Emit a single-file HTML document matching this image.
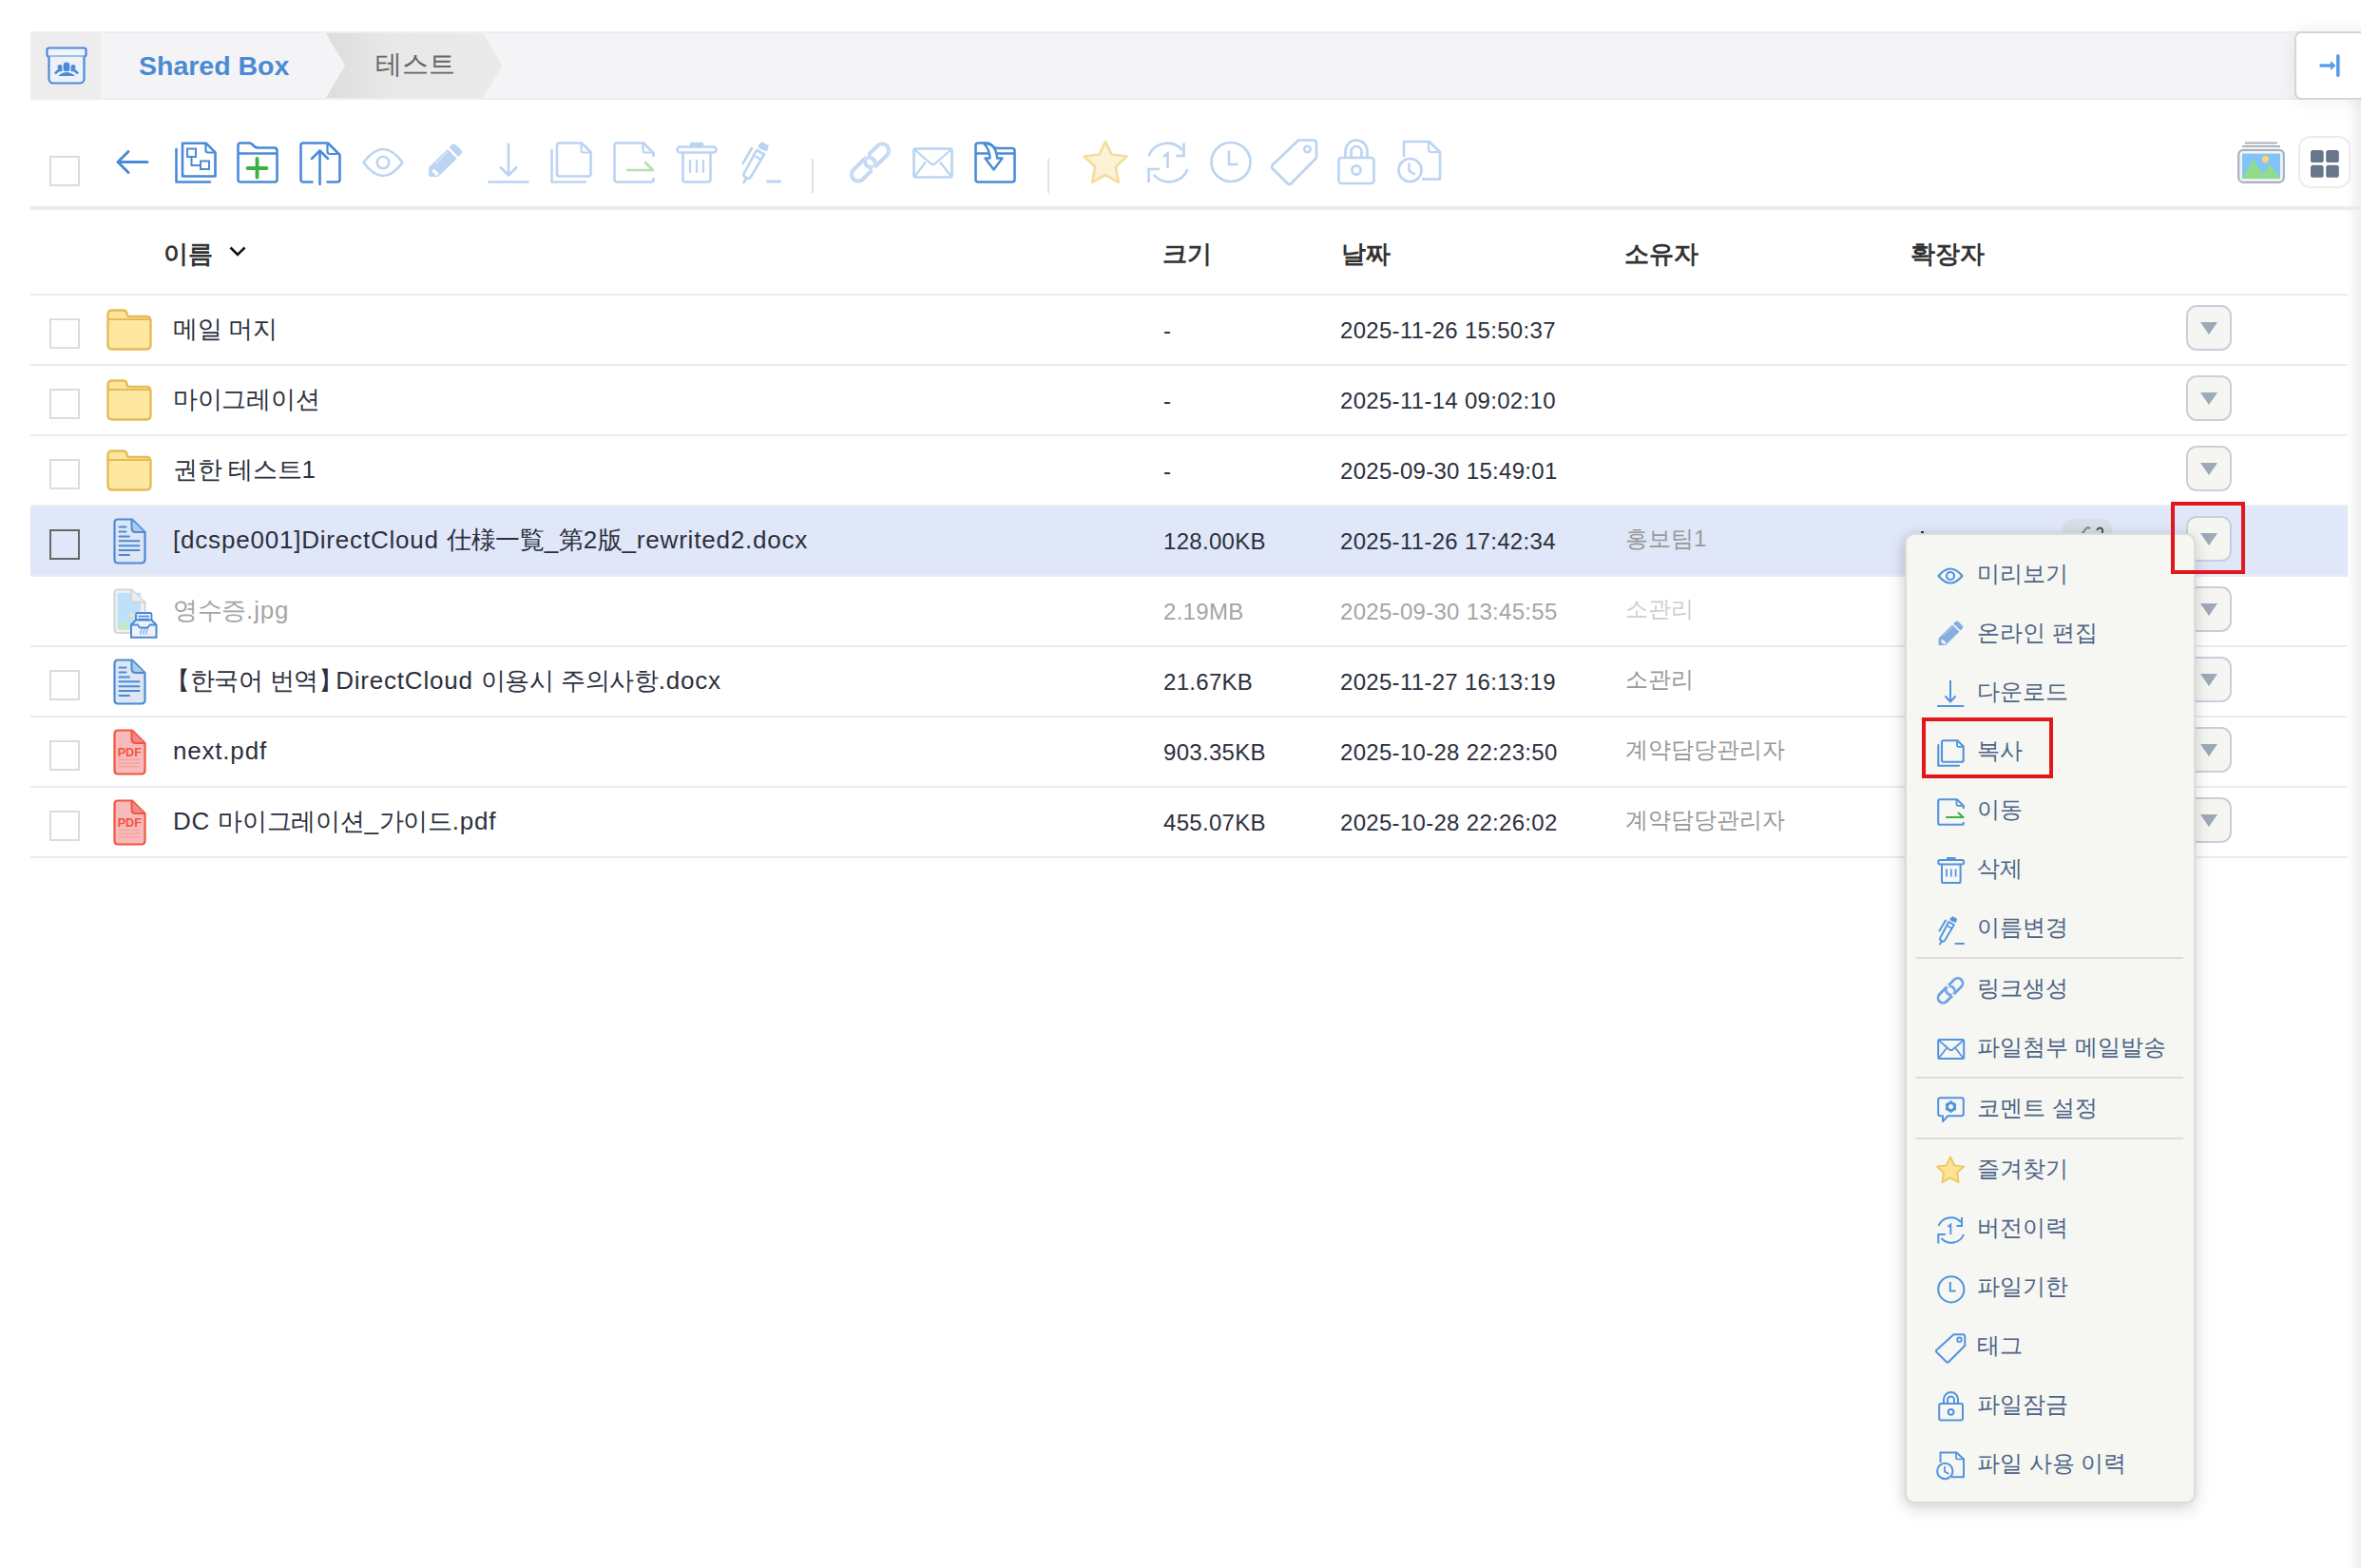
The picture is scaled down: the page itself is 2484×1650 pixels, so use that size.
<!DOCTYPE html>
<html><head><meta charset="utf-8">
<style>
*{box-sizing:border-box;margin:0;padding:0}
html,body{width:2484px;height:1650px;overflow:hidden;background:#fff;font-family:"Liberation Sans",sans-serif;position:relative}
.a{position:absolute}
svg.a{overflow:visible}
.txt{white-space:nowrap;line-height:1}
</style></head><body>

<!-- right panel shadow -->
<div class="a" style="left:2468px;top:100px;width:16px;height:1550px;background:linear-gradient(to right,rgba(0,0,0,0),rgba(0,0,0,0.06))"></div>

<!-- breadcrumb bar -->
<div class="a" style="left:32px;top:33px;width:2390px;height:72px;background:#f4f4f6;border:2px solid #eeeef1"></div>
<div class="a" style="left:34px;top:35px;width:72px;height:68px;background:#ededed"></div>


<!-- shared box icon -->
<svg class="a" style="left:48px;top:49px" width="44" height="40" viewBox="0 0 44 40">
 <rect x="1.5" y="1.5" width="41" height="9" rx="2" fill="#f0f3f8" stroke="#4a8ad8" stroke-width="2.2"/>
 <path d="M3.5 10.5 V34 a4.5 4.5 0 0 0 4.5 4.5 H36 a4.5 4.5 0 0 0 4.5 -4.5 V10.5" fill="#eef2f8" stroke="#4a8ad8" stroke-width="2.2"/>
 <circle cx="22" cy="20" r="3.4" fill="#4a8ad8"/><path d="M13 31 q9 -8 18 0 z" fill="#4a8ad8"/>
 <circle cx="15" cy="21.5" r="2.5" fill="#4a8ad8"/><circle cx="29" cy="21.5" r="2.5" fill="#4a8ad8"/>
 <path d="M10 28.5 q4 -5 7.5 -3.5 M34 28.5 q-4 -5 -7.5 -3.5" stroke="#4a8ad8" stroke-width="2.6" fill="none"/>
 <rect x="18.6" y="20" width="6.8" height="6" rx="2" fill="#4a8ad8"/>
</svg>
<div class="a txt" style="left:146px;top:55px;font-size:28.5px;font-weight:bold;color:#4a8ad4">Shared Box</div>
<!-- chevron segment -->
<svg class="a" style="left:343px;top:35px" width="186" height="68" viewBox="0 0 186 68">
 <defs><linearGradient id="cg" x1="0" x2="1" y1="0" y2="0"><stop offset="0" stop-color="#dcdcdc"/><stop offset="0.35" stop-color="#e8e8e8"/><stop offset="1" stop-color="#eaeaea"/></linearGradient></defs>
 <path d="M0 0 H165 L185.5 34 L165 68 H0 L20 34 Z" fill="url(#cg)"/>
</svg>
<div class="a txt" style="left:395px;top:54px;font-size:28px;color:#666">테스트</div>

<!-- collapse button -->
<div class="a" style="left:2414px;top:33px;width:90px;height:72px;background:#fff;border:2px solid #d6d6d6;border-radius:7px;box-shadow:0 0 22px rgba(0,0,0,0.07)"></div>
<svg class="a" style="left:2440px;top:56px" width="24" height="26" viewBox="0 0 24 26">
 <path d="M0.5 13 H13" stroke="#5b9be6" stroke-width="3.4"/>
 <path d="M12 8 L17.5 13 L12 18 Z" fill="#5b9be6"/>
 <rect x="18" y="1" width="3.6" height="24" rx="1.8" fill="#5b9be6"/>
</svg>


<!-- toolbar -->
<div class="a" style="left:52px;top:164px;width:32px;height:32px;border:2px solid #dcdcdc;background:#fff"></div>
<svg class="a" style="left:122px;top:157px" width="34" height="27" viewBox="0 0 34 27">
 <path d="M33 13.5 H2.5 M13 2.5 L2 13.5 L13 24.5" fill="none" stroke="#4a8ad8" stroke-width="3" stroke-linecap="round" stroke-linejoin="round"/>
</svg>
<!-- copy structure -->
<svg class="a" style="left:184px;top:149px" width="44" height="44" viewBox="0 0 44 44">
 <path d="M1.5 8 V42.5 H37" fill="none" stroke="#4a8ad8" stroke-width="2.6" stroke-linecap="round" stroke-linejoin="round"/>
 <path d="M8 1.8 H33 L42.5 11.3 V36.5 H8 Z" fill="none" stroke="#4a8ad8" stroke-width="2.6" stroke-linejoin="round"/>
 <path d="M32.5 2 V9 q0 2.5 2.5 2.5 H42" fill="none" stroke="#4a8ad8" stroke-width="2.2"/>
 <rect x="13" y="7.5" width="9" height="8.5" fill="none" stroke="#4a8ad8" stroke-width="2"/>
 <rect x="27" y="20.5" width="9" height="8.5" fill="none" stroke="#4a8ad8" stroke-width="2"/>
 <path d="M17.5 16 V25 H27" fill="none" stroke="#4a8ad8" stroke-width="2"/>
</svg>
<!-- new folder -->
<svg class="a" style="left:249px;top:149px" width="44" height="44" viewBox="0 0 44 44">
 <path d="M1.5 10 V4 q0 -2.5 2.5 -2.5 H13 q2 0 4 2 l1.5 1.5 q1.5 1.5 4 1.5 H39.5 q3 0 3 3 V40 q0 2.5 -2.5 2.5 H4 q-2.5 0 -2.5 -2.5 Z" fill="none" stroke="#4a8ad8" stroke-width="2.6"/>
 <path d="M1.5 12.5 H42.5" stroke="#4a8ad8" stroke-width="2.6"/>
 <path d="M11.5 28 H31.5 M21.5 18 V37.5" stroke="#3bb143" stroke-width="3.8" stroke-linecap="round"/>
</svg>
<!-- upload -->
<svg class="a" style="left:315px;top:149px" width="44" height="46" viewBox="0 0 44 46">
 <path d="M14.5 42.5 H4 q-2.5 0 -2.5 -2.5 V4 q0 -2.5 2.5 -2.5 H30 L42.5 14 V40 q0 2.5 -2.5 2.5 H28.5" fill="none" stroke="#4a8ad8" stroke-width="2.6" stroke-linejoin="round"/>
 <path d="M29.5 2 V10.5 q0 2.5 2.5 2.5 H42" fill="none" stroke="#4a8ad8" stroke-width="2.2"/>
 <path d="M21.5 45 V9.5 M13 18 L21.5 9.5 L30 18" fill="none" stroke="#4a8ad8" stroke-width="2.6" stroke-linecap="round" stroke-linejoin="round"/>
</svg>
<!-- eye (disabled) -->
<svg class="a" style="left:381px;top:156px" width="44" height="30" viewBox="0 0 44 30">
 <path d="M1.5 15 Q22 -13 42.5 15 Q22 43 1.5 15 Z" fill="none" stroke="#bad4f2" stroke-width="2.6" stroke-linejoin="round"/>
 <circle cx="22" cy="15" r="6.3" fill="none" stroke="#bad4f2" stroke-width="2.6"/>
</svg>
<!-- pencil (disabled) -->
<svg class="a" style="left:449px;top:152px" width="38" height="38" viewBox="0 0 28 28">
 <path d="M1.5 17.8 L16 3.6 L23.4 10.8 L8.8 25 H2.7 q-1.2 0 -1.2 -1.2 Z" fill="#bad4f2"/><path d="M17.2 2.3 L19.3 0.3 q1.6 -1.4 3.2 0 L26.6 4.2 q1.4 1.6 0 3.2 L24.5 9.5 Z" fill="#bad4f2"/><path d="M6.5 15.2 L16.3 5.4" stroke="#e3eefb" stroke-width="0.9"/><path d="M4.2 20.5 L5.7 18.8 L9.5 22.6 L8 24.2 L6.2 24 L6.4 22.4 L4.6 22.3 Z" fill="#fff"/>
</svg>
<!-- download (disabled) -->
<svg class="a" style="left:513px;top:149px" width="44" height="44" viewBox="0 0 44 44">
 <path d="M22 1.5 V35 M13 26.5 L22 35.5 L31 26.5" fill="none" stroke="#bad4f2" stroke-width="2.6" stroke-linejoin="round"/>
 <path d="M1.5 42.5 H42.5" stroke="#bad4f2" stroke-width="2.6" stroke-linecap="round"/>
</svg>
<!-- copy (disabled) -->
<svg class="a" style="left:579px;top:149px" width="44" height="44" viewBox="0 0 44 44">
 <path d="M1.5 9 V42.5 H37" fill="none" stroke="#bad4f2" stroke-width="2.6" stroke-linecap="round" stroke-linejoin="round"/>
 <path d="M7 4 q0 -2.5 2.5 -2.5 H33 L42.5 11 V34 q0 2.5 -2.5 2.5 H9.5 q-2.5 0 -2.5 -2.5 Z" fill="none" stroke="#bad4f2" stroke-width="2.6" stroke-linejoin="round"/>
 <path d="M32.5 2 V9 q0 2.5 2.5 2.5 H42" fill="none" stroke="#bad4f2" stroke-width="2.2"/>
</svg>
<!-- move (disabled) -->
<svg class="a" style="left:645px;top:149px" width="44" height="44" viewBox="0 0 44 44">
 <path d="M42.5 38 V40 q0 2.5 -2.5 2.5 H4 q-2.5 0 -2.5 -2.5 V4 q0 -2.5 2.5 -2.5 H32 L42.5 12 V16" fill="none" stroke="#bad4f2" stroke-width="2.6" stroke-linejoin="round"/>
 <path d="M31.5 2 V9 q0 2.5 2.5 2.5 H42" fill="none" stroke="#bad4f2" stroke-width="2.2"/>
 <path d="M15 30 H42 M34 22 L42 30" fill="none" stroke="#b5e0b0" stroke-width="2.6" stroke-linecap="round"/>
</svg>
<!-- trash (disabled) -->
<svg class="a" style="left:711px;top:149px" width="44" height="44" viewBox="0 0 44 44">
 <rect x="1.5" y="5.5" width="41" height="6" rx="3" fill="none" stroke="#bad4f2" stroke-width="2.6"/>
 <rect x="15.5" y="1.5" width="13" height="4" rx="1" fill="#bad4f2" stroke="#bad4f2" stroke-width="1.5"/>
 <path d="M7.5 12 V40 q0 2.5 2.5 2.5 H34 q2.5 0 2.5 -2.5 V12" fill="none" stroke="#bad4f2" stroke-width="2.6"/>
 <path d="M15 20 V32 M22 20 V32 M29 20 V32" stroke="#bad4f2" stroke-width="2.2" stroke-linecap="round"/>
</svg>
<!-- rename (disabled) -->
<svg class="a" style="left:778px;top:149px" width="44" height="44" viewBox="0 0 44 44">
 <path d="M13 7 L3.5 23" stroke="#bad4f2" stroke-width="2.6" stroke-linecap="round"/>
 <path d="M18 9 L26 13.5 L12 37 q-1.5 2.5 -4 1.5 l-2.5 -1.5 q-2 -1.5 -0.5 -4 Z" fill="none" stroke="#bad4f2" stroke-width="2.6" stroke-linejoin="round"/>
 <path d="M20.5 4 L23.5 1 L30 4.5 L28.5 9.5 L21 6.5 Z" fill="#bad4f2" stroke="#bad4f2" stroke-width="1.5" stroke-linejoin="round"/>
 <path d="M16.5 15.5 L23 19" stroke="#bad4f2" stroke-width="2"/>
 <path d="M7 39 L4.5 43" stroke="#bad4f2" stroke-width="2.6" stroke-linecap="round"/>
 <path d="M29.5 42 H42.5" stroke="#bad4f2" stroke-width="2.8" stroke-linecap="round"/>
</svg>
<div class="a" style="left:854px;top:167px;width:2px;height:36px;background:#e2e2e2"></div>
<!-- link (disabled) -->
<svg class="a" style="left:894px;top:149px" width="43" height="44" viewBox="0 0 43 44">
 <g fill="none" stroke="#bad4f2" stroke-width="3.8"><rect x="21.57" y="0.08" width="14" height="29.7" rx="7" transform="rotate(45 28.57 14.93)"/><rect x="7.43" y="14.22" width="14" height="29.7" rx="7" transform="rotate(45 14.43 29.07)"/></g><g fill="none" stroke="#e6effa" stroke-width="0.7"><rect x="21.57" y="0.08" width="14" height="29.7" rx="7" transform="rotate(45 28.57 14.93)"/><rect x="7.43" y="14.22" width="14" height="29.7" rx="7" transform="rotate(45 14.43 29.07)"/></g>
 <circle cx="16.8" cy="13.6" r="2.3" fill="#fff"/><circle cx="25.8" cy="29.6" r="2.3" fill="#fff"/>
</svg>
<!-- mail (disabled) -->
<svg class="a" style="left:960px;top:155px" width="43" height="33" viewBox="0 0 43 33">
 <rect x="1.5" y="1.5" width="40" height="30" rx="2" fill="none" stroke="#bad4f2" stroke-width="2.6"/>
 <path d="M2.5 2.5 L19 17 q2.5 2 5 0 L40.5 2.5 M2 31 L14 15.5 M41 31 L29 15.5" fill="none" stroke="#bad4f2" stroke-width="2.2"/>
</svg>
<!-- dropbox / save to -->
<svg class="a" style="left:1025px;top:149px" width="44" height="44" viewBox="0 0 44 44">
 <path d="M1.5 11 V4 q0 -2.5 2.5 -2.5 H13 q3 0 5 2 l2 2 q1.5 1.5 4 1.5 H40 q2.5 0 2.5 2.5 V40 q0 2.5 -2.5 2.5 H4 q-2.5 0 -2.5 -2.5 Z" fill="none" stroke="#4a8ad8" stroke-width="2.6"/>
 <path d="M1.5 12.5 H42.5" stroke="#4a8ad8" stroke-width="2.4"/>
 <path d="M10 2 q12 -1 14 14 v1.5 h5.5 l-9 12 l-9 -12 h5 q0 -9 -6.5 -15.5" fill="#fff" stroke="#4a8ad8" stroke-width="2.4" stroke-linejoin="round"/>
</svg>
<div class="a" style="left:1102px;top:167px;width:2px;height:36px;background:#e2e2e2"></div>
<!-- star -->
<svg class="a" style="left:1138px;top:147px" width="50" height="48" viewBox="0 0 50 48">
 <path d="M25 1.8 L31.5 15.5 L47.5 17.5 L35.8 28.6 L38.8 44.8 L25 37.2 L11.2 44.8 L14.2 28.6 L2.5 17.5 L18.5 15.5 Z" fill="#fdf2d3" stroke="#f3dc9c" stroke-width="2.6" stroke-linejoin="round"/>
</svg>
<!-- version -->
<svg class="a" style="left:1207px;top:149px" width="44" height="44" viewBox="0 0 44 44">
 <path d="M1.5 15 A21 21 0 0 1 37 9" fill="none" stroke="#bad4f2" stroke-width="2.6"/>
 <path d="M38.5 1.5 V15 H30" fill="none" stroke="#bad4f2" stroke-width="2.6"/>
 <path d="M42.5 29 A21 21 0 0 1 7 35" fill="none" stroke="#bad4f2" stroke-width="2.6"/>
 <path d="M1.5 43 V29 H13" fill="none" stroke="#bad4f2" stroke-width="2.6"/>
 <path d="M17 16 L21.5 12.5 V28" fill="none" stroke="#bad4f2" stroke-width="2.6"/>
</svg>
<!-- clock -->
<svg class="a" style="left:1273px;top:149px" width="44" height="44" viewBox="0 0 44 44">
 <circle cx="22" cy="21.5" r="20.5" fill="none" stroke="#bad4f2" stroke-width="2.6"/>
 <path d="M20 9.5 V24 H29.5" fill="none" stroke="#bad4f2" stroke-width="2.6"/>
</svg>
<!-- tag -->
<svg class="a" style="left:1337px;top:146px" width="50" height="50" viewBox="0 0 50 50">
 <path d="M29 1.5 H44.5 q3.5 0 3.5 3.5 V20 L21.5 47 q-2 2 -4 0 L2 31.5 q-2 -2 0 -4 Z" fill="none" stroke="#bad4f2" stroke-width="2.6" stroke-linejoin="round"/>
 <circle cx="38.5" cy="11" r="3.3" fill="none" stroke="#bad4f2" stroke-width="2.4"/>
</svg>
<!-- lock -->
<svg class="a" style="left:1407px;top:146px" width="40" height="49" viewBox="0 0 40 49">
 <path d="M8.5 21 V13 a11.5 11.5 0 0 1 23 0 V21" fill="none" stroke="#bad4f2" stroke-width="2.6"/>
 <path d="M14.5 21 V13.5 a5.5 5.5 0 0 1 11 0 V21" fill="none" stroke="#bad4f2" stroke-width="2.6"/>
 <rect x="1.5" y="20" width="37" height="27" rx="3" fill="none" stroke="#bad4f2" stroke-width="2.6"/>
 <circle cx="20" cy="33" r="4.6" fill="none" stroke="#bad4f2" stroke-width="2.6"/>
</svg>
<!-- file history -->
<svg class="a" style="left:1470px;top:147px" width="47" height="47" viewBox="0 0 47 47">
 <path d="M7 18 V2 H33.5 L45 13 V41.5 H26" fill="none" stroke="#bad4f2" stroke-width="2.6" stroke-linejoin="round"/>
 <path d="M33 2 V10.5 q0 2.5 2.5 2.5 H44" fill="none" stroke="#bad4f2" stroke-width="2.2"/>
 <circle cx="13.5" cy="32" r="12" fill="#fff" stroke="#bad4f2" stroke-width="2.6"/>
 <path d="M12.5 24.5 V33 L19 36.5" fill="none" stroke="#bad4f2" stroke-width="2.4"/>
</svg>
<!-- image view -->
<svg class="a" style="left:2354px;top:149px" width="50" height="44" viewBox="0 0 50 44">
 <path d="M8 1.5 H42" stroke="#a8b1be" stroke-width="2"/>
 <path d="M5 5 H45" stroke="#a8b1be" stroke-width="2"/>
 <rect x="1.2" y="8.8" width="47.6" height="34" rx="5" fill="#f3f4f6" stroke="#a8b1be" stroke-width="2.2"/>
 <rect x="5" y="12.6" width="40" height="26.5" fill="#82c4f7"/>
 <path d="M5 39.1 L17 18.5 L27 34.5 L34 23.8 L45 39.1 Z" fill="#90dc8c"/>
 <circle cx="29.5" cy="18.6" r="3.6" fill="#fdd46b"/>
</svg>
<div class="a" style="left:2418px;top:143px;width:55px;height:55px;border:2px solid #ececec;border-radius:13px;background:#fff"></div>
<svg class="a" style="left:2431px;top:158px" width="30" height="29" viewBox="0 0 30 29">
 <rect x="0" y="0" width="13.6" height="13" rx="2.6" fill="#67768a"/>
 <rect x="16.2" y="0" width="13.6" height="13" rx="2.6" fill="#67768a"/>
 <rect x="0" y="15.8" width="13.6" height="13" rx="2.6" fill="#67768a"/>
 <rect x="16.2" y="15.8" width="13.6" height="13" rx="2.6" fill="#67768a"/>
</svg>
<div class="a" style="left:32px;top:217px;width:2452px;height:4px;background:#ebecf0"></div>

<!-- table header -->
<div class="a txt" style="left:172px;top:254px;font-size:26px;font-weight:bold;color:#333">이름</div>
<svg class="a" style="left:241px;top:259px" width="18" height="11" viewBox="0 0 18 11"><path d="M1.5 1.5 L9 9 L16.5 1.5" fill="none" stroke="#111" stroke-width="2.6"/></svg>
<div class="a txt" style="left:1223px;top:254px;font-size:26px;font-weight:bold;color:#333">크기</div>
<div class="a txt" style="left:1411px;top:254px;font-size:26px;font-weight:bold;color:#333">날짜</div>
<div class="a txt" style="left:1709px;top:254px;font-size:26px;font-weight:bold;color:#333">소유자</div>
<div class="a txt" style="left:2010px;top:254px;font-size:26px;font-weight:bold;color:#333">확장자</div>
<div class="a" style="left:32px;top:309px;width:2438px;height:2px;background:#ebecf0"></div>

<div class="a" style="left:32px;top:383px;width:2438px;height:2px;background:#ebecf0"></div>
<div class="a" style="left:52px;top:335px;width:32px;height:32px;border:2px solid #dcdcdc;background:#fff"></div>
<svg class="a" style="left:112px;top:325px" width="48" height="44" viewBox="0 0 48 44">
 <path d="M1.5 8 V6 q0 -4.5 4.5 -4.5 H17 q4.5 0 4.5 4 q0 2.5 3 2.5 H42 q4.5 0 4.5 4.5 V38 q0 4.5 -4.5 4.5 H6 q-4.5 0 -4.5 -4.5 Z" fill="#fde59c"/>
 <path d="M3 12.5 H45.5 V38 q0 3.5 -3.5 3.5 H6 q-3 0 -3 -3.5 Z" fill="#fee79f"/>
 <path d="M1.5 11 H46.5" stroke="#e5bb55" stroke-width="2.2"/>
 <path d="M6 42.5 q-4.5 0 -4.5 -4.5 V6 q0 -4.5 4.5 -4.5 H17 q4.5 0 4.5 4 q0 2.5 3 2.5 H42 q4.5 0 4.5 4.5 V38 q0 4.5 -4.5 4.5 Z" fill="none" stroke="#e5bb55" stroke-width="2.4"/>
</svg>
<div class="a txt" style="left:182px;top:333px;font-size:26px;color:#2c2f3c"><span style="letter-spacing:-0.3px">메일 머지</span></div>
<div class="a txt" style="left:1224px;top:336px;font-size:24px;letter-spacing:0.3px;color:#2c2f3c">-</div>
<div class="a txt" style="left:1410px;top:336px;font-size:24px;letter-spacing:0.3px;color:#2c2f3c">2025-11-26 15:50:37</div>
<div class="a" style="left:2300px;top:321px;width:48px;height:48px;border:2px solid #c9d0da;border-radius:11px;background:#f5f5f2"></div>
<svg class="a" style="left:2315px;top:339px" width="18" height="13" viewBox="0 0 18 13"><path d="M0 0 H18 L9 13 Z" fill="#9da9b9"/></svg>
<div class="a" style="left:32px;top:457px;width:2438px;height:2px;background:#ebecf0"></div>
<div class="a" style="left:52px;top:409px;width:32px;height:32px;border:2px solid #dcdcdc;background:#fff"></div>
<svg class="a" style="left:112px;top:399px" width="48" height="44" viewBox="0 0 48 44">
 <path d="M1.5 8 V6 q0 -4.5 4.5 -4.5 H17 q4.5 0 4.5 4 q0 2.5 3 2.5 H42 q4.5 0 4.5 4.5 V38 q0 4.5 -4.5 4.5 H6 q-4.5 0 -4.5 -4.5 Z" fill="#fde59c"/>
 <path d="M3 12.5 H45.5 V38 q0 3.5 -3.5 3.5 H6 q-3 0 -3 -3.5 Z" fill="#fee79f"/>
 <path d="M1.5 11 H46.5" stroke="#e5bb55" stroke-width="2.2"/>
 <path d="M6 42.5 q-4.5 0 -4.5 -4.5 V6 q0 -4.5 4.5 -4.5 H17 q4.5 0 4.5 4 q0 2.5 3 2.5 H42 q4.5 0 4.5 4.5 V38 q0 4.5 -4.5 4.5 Z" fill="none" stroke="#e5bb55" stroke-width="2.4"/>
</svg>
<div class="a txt" style="left:182px;top:407px;font-size:26px;color:#2c2f3c"><span style="letter-spacing:-0.3px">마이그레이션</span></div>
<div class="a txt" style="left:1224px;top:410px;font-size:24px;letter-spacing:0.3px;color:#2c2f3c">-</div>
<div class="a txt" style="left:1410px;top:410px;font-size:24px;letter-spacing:0.3px;color:#2c2f3c">2025-11-14 09:02:10</div>
<div class="a" style="left:2300px;top:395px;width:48px;height:48px;border:2px solid #c9d0da;border-radius:11px;background:#f5f5f2"></div>
<svg class="a" style="left:2315px;top:413px" width="18" height="13" viewBox="0 0 18 13"><path d="M0 0 H18 L9 13 Z" fill="#9da9b9"/></svg>
<div class="a" style="left:32px;top:531px;width:2438px;height:2px;background:#ebecf0"></div>
<div class="a" style="left:52px;top:483px;width:32px;height:32px;border:2px solid #dcdcdc;background:#fff"></div>
<svg class="a" style="left:112px;top:473px" width="48" height="44" viewBox="0 0 48 44">
 <path d="M1.5 8 V6 q0 -4.5 4.5 -4.5 H17 q4.5 0 4.5 4 q0 2.5 3 2.5 H42 q4.5 0 4.5 4.5 V38 q0 4.5 -4.5 4.5 H6 q-4.5 0 -4.5 -4.5 Z" fill="#fde59c"/>
 <path d="M3 12.5 H45.5 V38 q0 3.5 -3.5 3.5 H6 q-3 0 -3 -3.5 Z" fill="#fee79f"/>
 <path d="M1.5 11 H46.5" stroke="#e5bb55" stroke-width="2.2"/>
 <path d="M6 42.5 q-4.5 0 -4.5 -4.5 V6 q0 -4.5 4.5 -4.5 H17 q4.5 0 4.5 4 q0 2.5 3 2.5 H42 q4.5 0 4.5 4.5 V38 q0 4.5 -4.5 4.5 Z" fill="none" stroke="#e5bb55" stroke-width="2.4"/>
</svg>
<div class="a txt" style="left:182px;top:481px;font-size:26px;color:#2c2f3c"><span style="letter-spacing:-0.3px">권한 테스트</span><span style="letter-spacing:0.8px">1</span></div>
<div class="a txt" style="left:1224px;top:484px;font-size:24px;letter-spacing:0.3px;color:#2c2f3c">-</div>
<div class="a txt" style="left:1410px;top:484px;font-size:24px;letter-spacing:0.3px;color:#2c2f3c">2025-09-30 15:49:01</div>
<div class="a" style="left:2300px;top:469px;width:48px;height:48px;border:2px solid #c9d0da;border-radius:11px;background:#f5f5f2"></div>
<svg class="a" style="left:2315px;top:487px" width="18" height="13" viewBox="0 0 18 13"><path d="M0 0 H18 L9 13 Z" fill="#9da9b9"/></svg>
<div class="a" style="left:32px;top:533px;width:2438px;height:72px;background:#dfe7f8"></div>
<div class="a" style="left:32px;top:605px;width:2438px;height:2px;background:#ebecf0"></div>
<div class="a" style="left:52px;top:557px;width:32px;height:32px;border:2px solid #666;background:transparent"></div>
<svg class="a" style="left:119px;top:545px" width="35" height="49" viewBox="0 0 35 49">
 <path d="M5 1.5 H20 L33.5 15 V43.5 q0 4 -4 4 H5 q-3.5 0 -3.5 -4 V5.5 q0 -4 3.5 -4 Z" fill="#dde6f2" stroke="#4a8ad8" stroke-width="2.2" stroke-linejoin="round"/>
 <path d="M19.5 2 V10.5 q0 4.5 4.5 4.5 H33" fill="#abcbe9" stroke="#4a8ad8" stroke-width="2"/>
 <path d="M6.5 9.5 H13.5 M6.5 14.5 H13.5 M6.5 19.5 H17 M6.5 24.3 H27.5 M6.5 29.2 H27.5 M6.5 34 H27.5 M6.5 39 H17" stroke="#4a8ad8" stroke-width="2" stroke-linecap="round"/>
</svg>
<div class="a txt" style="left:182px;top:555px;font-size:26px;color:#2c2f3c"><span style="letter-spacing:0.8px">[dcspe001]DirectCloud </span><span style="letter-spacing:-0.3px">仕様一覧</span><span style="letter-spacing:0.8px">_</span><span style="letter-spacing:-0.3px">第</span><span style="letter-spacing:0.8px">2</span><span style="letter-spacing:-0.3px">版</span><span style="letter-spacing:0.8px">_rewrited2.docx</span></div>
<div class="a txt" style="left:1224px;top:558px;font-size:24px;letter-spacing:0.3px;color:#2c2f3c">128.00KB</div>
<div class="a txt" style="left:1410px;top:558px;font-size:24px;letter-spacing:0.3px;color:#2c2f3c">2025-11-26 17:42:34</div>
<div class="a txt" style="left:1710px;top:555px;font-size:24px;color:#999">홍보팀1</div>
<div class="a" style="left:2300px;top:543px;width:48px;height:48px;border:2px solid #c9d0da;border-radius:11px;background:#f5f5f2"></div>
<svg class="a" style="left:2315px;top:561px" width="18" height="13" viewBox="0 0 18 13"><path d="M0 0 H18 L9 13 Z" fill="#9da9b9"/></svg>
<div class="a" style="left:32px;top:679px;width:2438px;height:2px;background:#ebecf0"></div>
<svg class="a" style="left:119px;top:619px" width="47" height="53" viewBox="0 0 47 53">
 <path d="M5 1.5 H19.5 L33.5 15 V43 q0 4 -4 4 H5 q-3.5 0 -3.5 -4 V5.5 q0 -4 3.5 -4 Z" fill="#f2f2f2" stroke="#d4d6da" stroke-width="2.2"/>
 <rect x="4.6" y="4.8" width="24.5" height="39" fill="#bde1fa"/>
 <path d="M19 2 V10 q0 4.5 4.5 4.5 H33" fill="#ececec" stroke="#d4d6da" stroke-width="2"/>
 <path d="M4.6 43.8 L11 32 L17.5 43.8 Z" fill="#c6eac0"/>
 <circle cx="19.5" cy="28" r="2.3" fill="#fde3a0"/>
 <rect x="24" y="26" width="16.5" height="11" rx="1.5" fill="#e8eef8" stroke="#4a8ad8" stroke-width="1.8"/>
 <path d="M26.5 29.5 H38 M26.5 32.5 H38" stroke="#4a8ad8" stroke-width="1.3"/>
 <path d="M19 38.5 L24 33.5 H40.5 L45.5 38.5 V51.8 H19 Z" fill="#eef2f8" stroke="#4a8ad8" stroke-width="2"/>
 <path d="M19.5 38.5 H26 q1 3 3 3 H35.5 q2 0 3 -3 H45" fill="none" stroke="#4a8ad8" stroke-width="1.8"/>
 <path d="M29.5 48.5 q-1.5 -2 0 -4 q1.5 -2 0 -3.5 M32.5 48.5 q-1.5 -2 0 -4 q1.5 -2 0 -3.5 M35.5 48.5 q-1.5 -2 0 -4 q1.5 -2 0 -3.5" fill="none" stroke="#4a8ad8" stroke-width="1"/>
</svg>
<div class="a txt" style="left:182px;top:629px;font-size:26px;color:#a5a5a5"><span style="letter-spacing:-0.3px">영수증</span><span style="letter-spacing:0.8px">.jpg</span></div>
<div class="a txt" style="left:1224px;top:632px;font-size:24px;letter-spacing:0.3px;color:#a5a5a5">2.19MB</div>
<div class="a txt" style="left:1410px;top:632px;font-size:24px;letter-spacing:0.3px;color:#a5a5a5">2025-09-30 13:45:55</div>
<div class="a txt" style="left:1710px;top:629px;font-size:24px;color:#cfcfcf">소관리</div>
<div class="a" style="left:2300px;top:617px;width:48px;height:48px;border:2px solid #c9d0da;border-radius:11px;background:#f5f5f2"></div>
<svg class="a" style="left:2315px;top:635px" width="18" height="13" viewBox="0 0 18 13"><path d="M0 0 H18 L9 13 Z" fill="#9da9b9"/></svg>
<div class="a" style="left:32px;top:753px;width:2438px;height:2px;background:#ebecf0"></div>
<div class="a" style="left:52px;top:705px;width:32px;height:32px;border:2px solid #dcdcdc;background:#fff"></div>
<svg class="a" style="left:119px;top:693px" width="35" height="49" viewBox="0 0 35 49">
 <path d="M5 1.5 H20 L33.5 15 V43.5 q0 4 -4 4 H5 q-3.5 0 -3.5 -4 V5.5 q0 -4 3.5 -4 Z" fill="#dde6f2" stroke="#4a8ad8" stroke-width="2.2" stroke-linejoin="round"/>
 <path d="M19.5 2 V10.5 q0 4.5 4.5 4.5 H33" fill="#abcbe9" stroke="#4a8ad8" stroke-width="2"/>
 <path d="M6.5 9.5 H13.5 M6.5 14.5 H13.5 M6.5 19.5 H17 M6.5 24.3 H27.5 M6.5 29.2 H27.5 M6.5 34 H27.5 M6.5 39 H17" stroke="#4a8ad8" stroke-width="2" stroke-linecap="round"/>
</svg>
<div class="a txt" style="left:182px;top:703px;font-size:26px;color:#2c2f3c"><span style="letter-spacing:-0.3px"><span style="margin-left:-8px">【</span>한국어 번역<span style="letter-spacing:-8px">】</span></span><span style="letter-spacing:0.8px">DirectCloud </span><span style="letter-spacing:-0.3px">이용시 주의사항</span><span style="letter-spacing:0.8px">.docx</span></div>
<div class="a txt" style="left:1224px;top:706px;font-size:24px;letter-spacing:0.3px;color:#2c2f3c">21.67KB</div>
<div class="a txt" style="left:1410px;top:706px;font-size:24px;letter-spacing:0.3px;color:#2c2f3c">2025-11-27 16:13:19</div>
<div class="a txt" style="left:1710px;top:703px;font-size:24px;color:#999">소관리</div>
<div class="a" style="left:2300px;top:691px;width:48px;height:48px;border:2px solid #c9d0da;border-radius:11px;background:#f5f5f2"></div>
<svg class="a" style="left:2315px;top:709px" width="18" height="13" viewBox="0 0 18 13"><path d="M0 0 H18 L9 13 Z" fill="#9da9b9"/></svg>
<div class="a" style="left:32px;top:827px;width:2438px;height:2px;background:#ebecf0"></div>
<div class="a" style="left:52px;top:779px;width:32px;height:32px;border:2px solid #dcdcdc;background:#fff"></div>
<svg class="a" style="left:119px;top:767px" width="35" height="49" viewBox="0 0 35 49">
 <path d="M5 1.5 H20 L33.5 15 V43.5 q0 4 -4 4 H5 q-3.5 0 -3.5 -4 V5.5 q0 -4 3.5 -4 Z" fill="#f7bbbb" stroke="#f25440" stroke-width="2.2" stroke-linejoin="round"/>
 <path d="M19.5 2 V10.5 q0 4.5 4.5 4.5 H33" fill="#ef8a88" stroke="#f25440" stroke-width="2"/>
 <text x="17.3" y="28.5" font-family="Liberation Sans" font-weight="bold" font-size="12.6" fill="#f25440" text-anchor="middle">PDF</text>
 <path d="M6 32.5 H28 M6 36.2 H28 M6 39.8 H28" stroke="#f3a3a0" stroke-width="1.4"/>
</svg>
<div class="a txt" style="left:182px;top:777px;font-size:26px;color:#2c2f3c"><span style="letter-spacing:0.8px">next.pdf</span></div>
<div class="a txt" style="left:1224px;top:780px;font-size:24px;letter-spacing:0.3px;color:#2c2f3c">903.35KB</div>
<div class="a txt" style="left:1410px;top:780px;font-size:24px;letter-spacing:0.3px;color:#2c2f3c">2025-10-28 22:23:50</div>
<div class="a txt" style="left:1710px;top:777px;font-size:24px;color:#999">계약담당관리자</div>
<div class="a" style="left:2300px;top:765px;width:48px;height:48px;border:2px solid #c9d0da;border-radius:11px;background:#f5f5f2"></div>
<svg class="a" style="left:2315px;top:783px" width="18" height="13" viewBox="0 0 18 13"><path d="M0 0 H18 L9 13 Z" fill="#9da9b9"/></svg>
<div class="a" style="left:32px;top:901px;width:2438px;height:2px;background:#ebecf0"></div>
<div class="a" style="left:52px;top:853px;width:32px;height:32px;border:2px solid #dcdcdc;background:#fff"></div>
<svg class="a" style="left:119px;top:841px" width="35" height="49" viewBox="0 0 35 49">
 <path d="M5 1.5 H20 L33.5 15 V43.5 q0 4 -4 4 H5 q-3.5 0 -3.5 -4 V5.5 q0 -4 3.5 -4 Z" fill="#f7bbbb" stroke="#f25440" stroke-width="2.2" stroke-linejoin="round"/>
 <path d="M19.5 2 V10.5 q0 4.5 4.5 4.5 H33" fill="#ef8a88" stroke="#f25440" stroke-width="2"/>
 <text x="17.3" y="28.5" font-family="Liberation Sans" font-weight="bold" font-size="12.6" fill="#f25440" text-anchor="middle">PDF</text>
 <path d="M6 32.5 H28 M6 36.2 H28 M6 39.8 H28" stroke="#f3a3a0" stroke-width="1.4"/>
</svg>
<div class="a txt" style="left:182px;top:851px;font-size:26px;color:#2c2f3c"><span style="letter-spacing:0.8px">DC </span><span style="letter-spacing:-0.3px">마이그레이션</span><span style="letter-spacing:0.8px">_</span><span style="letter-spacing:-0.3px">가이드</span><span style="letter-spacing:0.8px">.pdf</span></div>
<div class="a txt" style="left:1224px;top:854px;font-size:24px;letter-spacing:0.3px;color:#2c2f3c">455.07KB</div>
<div class="a txt" style="left:1410px;top:854px;font-size:24px;letter-spacing:0.3px;color:#2c2f3c">2025-10-28 22:26:02</div>
<div class="a txt" style="left:1710px;top:851px;font-size:24px;color:#999">계약담당관리자</div>
<div class="a" style="left:2300px;top:839px;width:48px;height:48px;border:2px solid #c9d0da;border-radius:11px;background:#f5f5f2"></div>
<svg class="a" style="left:2315px;top:857px" width="18" height="13" viewBox="0 0 18 13"><path d="M0 0 H18 L9 13 Z" fill="#9da9b9"/></svg>
<!-- badge under menu -->
<div class="a" style="left:2170px;top:546px;width:52px;height:40px;border-radius:10px;background:#d8dee8"></div>
<svg class="a" style="left:2186px;top:553px" width="30" height="12" viewBox="0 0 30 12"><path d="M2 12 L8 4 q3 -3.5 5 -0.5" fill="none" stroke="#8a8f98" stroke-width="2.2"/><path d="M20 5 q2 -3.5 5 -2 q2 1.5 0.5 5" fill="none" stroke="#555" stroke-width="2"/></svg>
<div class="a" style="left:2021px;top:559px;width:3px;height:3px;background:#333"></div>
<!-- context menu -->
<div class="a" style="left:2004px;top:561px;width:306px;height:1021px;background:#f6f6f3;border:2px solid #dcdcdc;border-radius:10px;box-shadow:0 5px 18px rgba(0,0,0,0.16),-2px 0 10px rgba(0,0,0,0.06)"></div>
<div class="a" style="left:2016px;top:1007px;width:281px;height:2px;background:#dcdcdc"></div>
<div class="a" style="left:2016px;top:1133px;width:281px;height:2px;background:#dcdcdc"></div>
<div class="a" style="left:2016px;top:1197px;width:281px;height:2px;background:#dcdcdc"></div>

<svg class="a" style="left:2038px;top:596px" width="28" height="20" viewBox="0 0 28 20"><path d="M1.5 10 Q14 -5 26.5 10 Q14 25 1.5 10 Z" fill="none" stroke="#5194de" stroke-width="2.2" stroke-linejoin="round"/><circle cx="14" cy="10" r="4" fill="none" stroke="#5194de" stroke-width="2.2"/></svg>
<div class="a txt" style="left:2080px;top:592px;font-size:24px;color:#4d6586">미리보기</div>
<svg class="a" style="left:2038px;top:654px" width="28" height="28" viewBox="0 0 28 28"><path d="M1.5 17.8 L16 3.6 L23.4 10.8 L8.8 25 H2.7 q-1.2 0 -1.2 -1.2 Z" fill="#86ade0"/><path d="M17.2 2.3 L19.3 0.3 q1.6 -1.4 3.2 0 L26.6 4.2 q1.4 1.6 0 3.2 L24.5 9.5 Z" fill="#86ade0"/><path d="M6.5 15.2 L16.3 5.4" stroke="#c9dbf3" stroke-width="0.9"/><path d="M4.2 20.5 L5.7 18.8 L9.5 22.6 L8 24.2 L6.2 24 L6.4 22.4 L4.6 22.3 Z" fill="#f6f6f3"/></svg>
<div class="a txt" style="left:2080px;top:654px;font-size:24px;color:#4d6586">온라인 편집</div>
<svg class="a" style="left:2038px;top:715px" width="28" height="30" viewBox="0 0 28 30"><path d="M14 1 V23 M8.5 17.5 L14 23.5 L19.5 17.5" fill="none" stroke="#5194de" stroke-width="2" stroke-linejoin="round"/><path d="M1 28 H27.5" stroke="#5194de" stroke-width="2.2" stroke-linecap="round"/></svg>
<div class="a txt" style="left:2080px;top:716px;font-size:24px;color:#4d6586">다운로드</div>
<svg class="a" style="left:2038px;top:778px" width="29" height="29" viewBox="0 0 29 29"><path d="M1.3 6 V27.8 H23" fill="none" stroke="#5194de" stroke-width="2.1" stroke-linecap="round" stroke-linejoin="round"/><path d="M5 3 q0 -1.8 1.8 -1.8 H21.5 L27.7 7.5 V22 q0 1.8 -1.8 1.8 H6.8 q-1.8 0 -1.8 -1.8 Z" fill="none" stroke="#5194de" stroke-width="2.1" stroke-linejoin="round"/><path d="M21 1.5 V6 q0 1.8 1.8 1.8 H27.5" fill="none" stroke="#5194de" stroke-width="1.8"/></svg>
<div class="a txt" style="left:2080px;top:778px;font-size:24px;color:#4d6586">복사</div>
<svg class="a" style="left:2038px;top:840px" width="29" height="29" viewBox="0 0 29 29"><path d="M27.8 25 V26 q0 1.8 -1.8 1.8 H3 q-1.8 0 -1.8 -1.8 V3 q0 -1.8 1.8 -1.8 H21 L27.8 8 V11" fill="none" stroke="#5194de" stroke-width="2.1" stroke-linejoin="round"/><path d="M20.5 1.5 V6 q0 1.8 1.8 1.8 H27.5" fill="none" stroke="#5194de" stroke-width="1.8"/><path d="M10 20 H27.5 M22.5 15.5 L27.5 20" fill="none" stroke="#3bb143" stroke-width="2.1" stroke-linecap="round"/></svg>
<div class="a txt" style="left:2080px;top:840px;font-size:24px;color:#4d6586">이동</div>
<svg class="a" style="left:2038px;top:901px" width="29" height="30" viewBox="0 0 29 30"><rect x="1.2" y="4" width="27" height="4.5" rx="2.2" fill="none" stroke="#5194de" stroke-width="2"/><rect x="10" y="1" width="9.5" height="3" fill="#5194de"/><path d="M5 8.5 V26.5 q0 1.6 1.6 1.6 H23 q1.6 0 1.6 -1.6 V8.5" fill="none" stroke="#5194de" stroke-width="2"/><path d="M10 13.5 V21.5 M14.8 13.5 V21.5 M19.6 13.5 V21.5" stroke="#5194de" stroke-width="1.7"/></svg>
<div class="a txt" style="left:2080px;top:902px;font-size:24px;color:#4d6586">삭제</div>
<svg class="a" style="left:2038px;top:964px" width="29" height="31" viewBox="0 0 29 31"><path d="M9 4.5 L2.5 15.5" stroke="#5194de" stroke-width="1.9" stroke-linecap="round"/><path d="M12.3 6 L17.8 9.2 L8.2 25.5 q-1 1.7 -2.7 1 l-1.7 -1 q-1.4 -1 -0.4 -2.7 Z" fill="none" stroke="#5194de" stroke-width="1.9" stroke-linejoin="round"/><path d="M14 2.7 L16 0.7 L20.5 3 L19.5 6.5 L14.4 4.4 Z" fill="#5194de" stroke="#5194de" stroke-width="1" stroke-linejoin="round"/><path d="M11.2 10.5 L15.7 13" stroke="#5194de" stroke-width="1.5"/><path d="M4.8 26.5 L3 29.5" stroke="#5194de" stroke-width="1.9" stroke-linecap="round"/><path d="M19.5 29 H28" stroke="#5194de" stroke-width="2" stroke-linecap="round"/></svg>
<div class="a txt" style="left:2080px;top:964px;font-size:24px;color:#4d6586">이름변경</div>
<svg class="a" style="left:2038px;top:1028px" width="28" height="28" viewBox="0 0 28 28"><g fill="none" stroke="#5194de" stroke-width="2.6"><rect x="12.9" y="-0.15" width="10.6" height="20.5" rx="5.3" transform="rotate(45 18.2 10.1)"/><rect x="4.5" y="8.25" width="10.6" height="20.5" rx="5.3" transform="rotate(45 9.8 18.5)"/></g><g fill="none" stroke="#a8c8ef" stroke-width="0.6"><rect x="12.9" y="-0.15" width="10.6" height="20.5" rx="5.3" transform="rotate(45 18.2 10.1)"/><rect x="4.5" y="8.25" width="10.6" height="20.5" rx="5.3" transform="rotate(45 9.8 18.5)"/></g><circle cx="11.2" cy="9.6" r="1.5" fill="#f6f6f3"/><circle cx="16.9" cy="19" r="1.5" fill="#f6f6f3"/></svg>
<div class="a txt" style="left:2080px;top:1028px;font-size:24px;color:#4d6586">링크생성</div>
<svg class="a" style="left:2038px;top:1090px" width="30" height="28" viewBox="0 0 30 28"><rect x="1.2" y="4" width="27" height="20" rx="1.5" fill="none" stroke="#5194de" stroke-width="2"/><path d="M2 4.8 L13 14.5 q1.7 1.4 3.4 0 L27.5 4.8 M1.8 23.5 L10 13 M27.5 23.5 L19.4 13" fill="none" stroke="#5194de" stroke-width="1.7"/></svg>
<div class="a txt" style="left:2080px;top:1090px;font-size:24px;color:#4d6586">파일첨부 메일발송</div>
<svg class="a" style="left:2038px;top:1154px" width="29" height="27" viewBox="0 0 29 27"><path d="M3.5 1.2 H25.5 q2.3 0 2.3 2.3 V18 q0 2.3 -2.3 2.3 H11.5 L6 26 V20.3 H3.5 q-2.3 0 -2.3 -2.3 V3.5 q0 -2.3 2.3 -2.3 Z" fill="none" stroke="#5194de" stroke-width="2" stroke-linejoin="round"/><circle cx="14.5" cy="10.6" r="4" fill="none" stroke="#5194de" stroke-width="3"/><g stroke="#5194de" stroke-width="2.6"><path d="M14.5 4.5 V6.6 M14.5 14.6 V16.7"/><path d="M14.5 4.5 V6.6 M14.5 14.6 V16.7" transform="rotate(60 14.5 10.6)"/><path d="M14.5 4.5 V6.6 M14.5 14.6 V16.7" transform="rotate(-60 14.5 10.6)"/></g></svg>
<div class="a txt" style="left:2080px;top:1154px;font-size:24px;color:#4d6586">코멘트 설정</div>
<svg class="a" style="left:2036px;top:1216px" width="32" height="30" viewBox="0 0 32 30"><path d="M16 1.5 L20.3 10.3 L30 11.6 L23 18.4 L24.7 28.2 L16 23.5 L7.3 28.2 L9 18.4 L2 11.6 L11.7 10.3 Z" fill="#fde392" stroke="#ecc660" stroke-width="1.8" stroke-linejoin="round"/></svg>
<div class="a txt" style="left:2080px;top:1218px;font-size:24px;color:#4d6586">즐겨찾기</div>
<svg class="a" style="left:2038px;top:1280px" width="30" height="30" viewBox="0 0 30 30"><path d="M1.5 10 A14 14 0 0 1 25 6" fill="none" stroke="#5194de" stroke-width="2"/><path d="M26 1 V10 H20.5" fill="none" stroke="#5194de" stroke-width="2"/><path d="M28 19 A14 14 0 0 1 4.5 23" fill="none" stroke="#5194de" stroke-width="2"/><path d="M1.3 28.5 V19 H8.8" fill="none" stroke="#5194de" stroke-width="2"/><path d="M11.5 11 L14.3 8.5 V19" fill="none" stroke="#5194de" stroke-width="1.9"/></svg>
<div class="a txt" style="left:2080px;top:1280px;font-size:24px;color:#4d6586">버전이력</div>
<svg class="a" style="left:2038px;top:1342px" width="30" height="30" viewBox="0 0 30 30"><circle cx="14.8" cy="14.8" r="13.6" fill="none" stroke="#5194de" stroke-width="2"/><path d="M13.8 7 V16.5 H19.5" fill="none" stroke="#5194de" stroke-width="2"/></svg>
<div class="a txt" style="left:2080px;top:1342px;font-size:24px;color:#4d6586">파일기한</div>
<svg class="a" style="left:2036px;top:1403px" width="33" height="32" viewBox="0 0 33 32"><path d="M19.5 1.2 H29 q2.3 0 2.3 2.3 V13 L14.3 30 q-1.3 1.3 -2.6 0 L1.6 20 q-1.3 -1.3 0 -2.6 Z" fill="none" stroke="#5194de" stroke-width="2" stroke-linejoin="round"/><circle cx="25.5" cy="6.8" r="2.3" fill="none" stroke="#5194de" stroke-width="1.8"/></svg>
<div class="a txt" style="left:2080px;top:1404px;font-size:24px;color:#4d6586">태그</div>
<svg class="a" style="left:2039px;top:1464px" width="28" height="32" viewBox="0 0 28 32"><path d="M6 13.5 V8.5 a7.5 7.5 0 0 1 15 0 V13.5" fill="none" stroke="#5194de" stroke-width="2"/><path d="M10 13.5 V9 a3.5 3.5 0 0 1 7 0 V13.5" fill="none" stroke="#5194de" stroke-width="2"/><rect x="1.2" y="13" width="24.8" height="17.5" rx="2" fill="none" stroke="#5194de" stroke-width="2"/><circle cx="13.6" cy="21.8" r="2.9" fill="none" stroke="#5194de" stroke-width="2"/></svg>
<div class="a txt" style="left:2080px;top:1466px;font-size:24px;color:#4d6586">파일잠금</div>
<svg class="a" style="left:2037px;top:1527px" width="31" height="30" viewBox="0 0 31 30"><path d="M4.5 12 V1.5 H21.5 L29 8.5 V27.3 H16" fill="none" stroke="#5194de" stroke-width="2" stroke-linejoin="round"/><path d="M21 2 V6.5 q0 2 2 2 H28.5" fill="none" stroke="#5194de" stroke-width="1.7"/><circle cx="9.3" cy="21" r="8.2" fill="#f6f6f3" stroke="#5194de" stroke-width="2"/><path d="M9 16 V21.5 L13.5 24" fill="none" stroke="#5194de" stroke-width="1.8"/></svg>
<div class="a txt" style="left:2080px;top:1528px;font-size:24px;color:#4d6586">파일 사용 이력</div>
<!-- annotation boxes -->
<div class="a" style="left:2284px;top:528px;width:78px;height:76px;border:4px solid #e3161b"></div>
<div class="a" style="left:2022px;top:755px;width:138px;height:64px;border:4px solid #e3161b"></div>


</body></html>
